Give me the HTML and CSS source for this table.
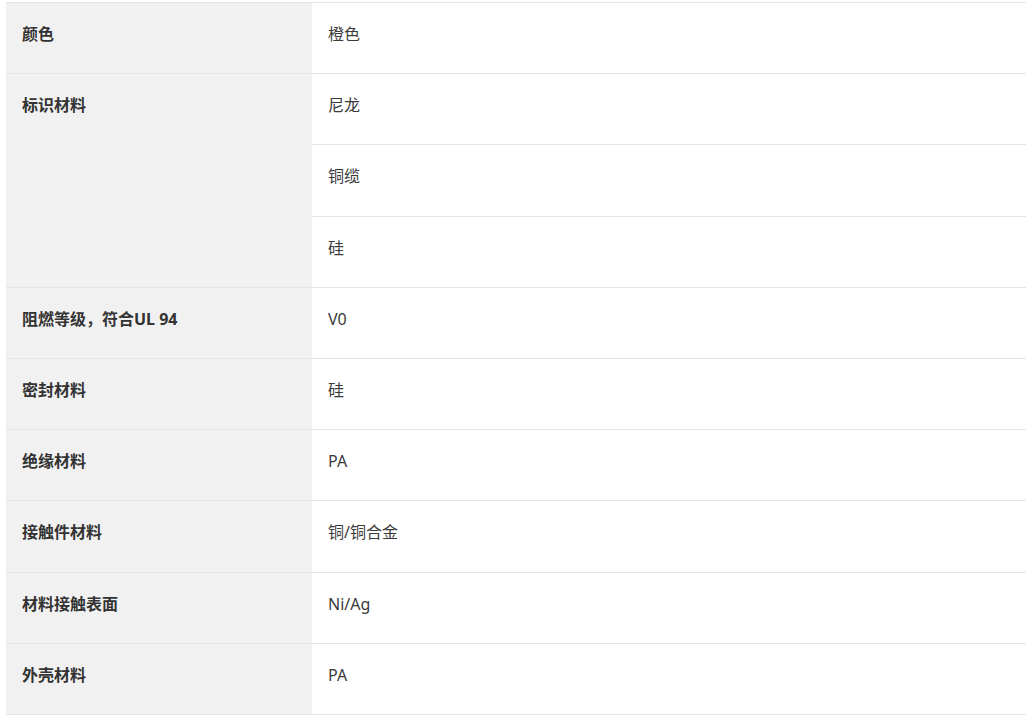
FILE: index.html
```html
<!DOCTYPE html>
<html lang="zh-CN">
<head>
<meta charset="utf-8">
<link rel="stylesheet" href="styles.css">
</head>
<body>
<div class="wrap">
<table class="spec">
<tbody>
<tr><th>颜色</th><td>橙色</td></tr>
<tr><th rowspan="3">标识材料</th><td>尼龙</td></tr>
<tr><td>铜缆</td></tr>
<tr><td>硅</td></tr>
<tr><th>阻燃等级，符合UL 94</th><td>V0</td></tr>
<tr><th>密封材料</th><td>硅</td></tr>
<tr><th>绝缘材料</th><td>PA</td></tr>
<tr><th>接触件材料</th><td>铜/铜合金</td></tr>
<tr><th>材料接触表面</th><td>Ni/Ag</td></tr>
<tr><th>外壳材料</th><td>PA</td></tr>
</tbody>
</table>
</div>
</body>
</html>
```
FILE: styles.css
```css
html, body {
  margin: 0;
  padding: 0;
  background: #ffffff;
}
.wrap {
  padding: 2px 10px 0 6px;
}
.spec {
  width: 1020px;
  border-collapse: collapse;
  table-layout: fixed;
  font-family: "Noto Sans", "Noto Sans CJK SC", sans-serif;
  font-size: 16px;
  color: #333333;
}
.spec th,
.spec td {
  border-top: 1px solid #e3e3e8;
  border-bottom: 1px solid #e3e3e8;
  padding: 19px 16px 27.2px;
  line-height: 24px;
  text-align: left;
  vertical-align: top;
}
.spec th {
  width: 274px;
  background: #f1f1f1;
  font-weight: 700;
  color: #333333;
}
.spec td {
  font-weight: 400;
  color: #3a3a3a;
}
```
